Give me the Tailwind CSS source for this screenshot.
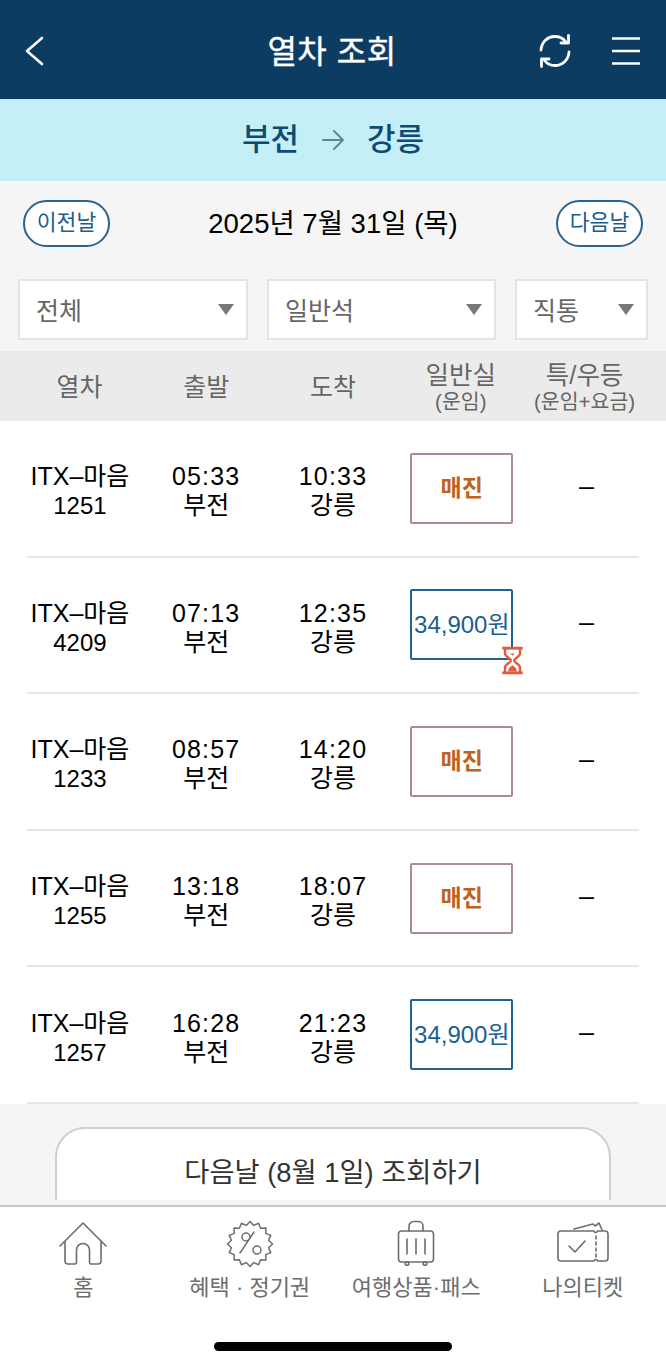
<!DOCTYPE html>
<html lang="ko">
<head>
<meta charset="utf-8">
<script src="https://cdn.jsdelivr.net/npm/@tailwindcss/browser@4"></script>
</head>
<body class="bg-white font-['Liberation_Sans','Noto_Sans_CJK_KR',sans-serif]">
<div class="w-[666px] h-[1365px] overflow-hidden flex flex-col bg-[#f5f5f5]">
  <!-- header -->
  <header class="h-[99px] shrink-0 bg-[#0c3c62] flex items-center text-white pl-[23px] pr-[25px] pt-[3px]">
    <div class="flex-1"><svg class="w-[22px] h-[30px]" viewBox="0 0 22 30" fill="none" stroke="#fff" stroke-width="2.6" stroke-linecap="round" stroke-linejoin="round"><path d="M19 2 4 15l15 13"/></svg></div>
    <h1 class="text-[32px] font-normal leading-none tracking-[0.5px] mt-[2px] [-webkit-text-stroke:0.4px_white]">열차 조회</h1>
    <div class="flex-1 flex items-center justify-end gap-[39px]">
      <svg class="w-[34px] h-[34px]" viewBox="0 0 34 34" fill="none" stroke="#fff" stroke-width="2.8" stroke-linecap="round" stroke-linejoin="round"><path d="M3 16C3.5 8 9.5 2.5 17 2.5c4.500 0 8 1.800 10.500 5"/><path d="M31 18c-.5 8-6.500 13.500-14 13.500-4.500 0-8-1.800-10.500-5"/><path d="M30.500 1.500v7.500h-7.500"/><path d="M3.500 32.500V25h7.500"/></svg>
      <svg class="w-[30px] h-[30px]" viewBox="0 0 30 30" fill="none" stroke="#fff" stroke-width="2.500"><path d="M1 2.500h28M1 15h28M1 27.500h28"/></svg>
    </div>
  </header>
  <!-- route -->
  <div class="h-[82px] shrink-0 bg-[#c5eff6] flex items-center justify-center gap-[22px] pt-[1px] text-[31px] font-medium text-[#0e4a72]">
    <span>부전</span>
    <svg class="w-[24px] h-[22px] -mt-[2px]" viewBox="0 0 24 22" fill="none" stroke="#5f8197" stroke-width="1.800" stroke-linecap="round" stroke-linejoin="round"><path d="M2 11h20M13 2l9 9-9 9"/></svg>
    <span>강릉</span>
  </div>
  <!-- date -->
  <div class="h-[98px] shrink-0 flex items-start justify-between pl-[23px] pr-[23px] pt-[19px]">
    <button class="w-[87px] h-[47px] rounded-[24px] border-2 border-[#2a6390] bg-white text-[21.5px] text-[#1c5d8b]">이전날</button>
    <div class="text-[27.5px] leading-[47px] text-black">2025년 7월 31일 (목)</div>
    <button class="w-[87px] h-[47px] rounded-[24px] border-2 border-[#2a6390] bg-white text-[21.5px] text-[#1c5d8b]">다음날</button>
  </div>
  <!-- filters -->
  <div class="h-[72px] shrink-0 flex items-start pl-[18px] gap-[19px] text-[25px] text-[#666]">
    <div class="w-[230px] h-[61px] bg-white border-2 border-[#e4e4e4] flex items-center justify-between pl-[16px] pr-[12px]"><span class="mt-[5px]">전체</span><span class="w-0 h-0 border-x-[8px] border-x-transparent border-t-[11px] border-t-[#777]"></span></div>
    <div class="w-[229px] h-[61px] bg-white border-2 border-[#e4e4e4] flex items-center justify-between pl-[16px] pr-[12px]"><span class="mt-[5px]">일반석</span><span class="w-0 h-0 border-x-[8px] border-x-transparent border-t-[11px] border-t-[#777]"></span></div>
    <div class="w-[133px] h-[61px] bg-white border-2 border-[#e4e4e4] flex items-center justify-between pl-[16px] pr-[12px]"><span class="mt-[5px]">직통</span><span class="w-0 h-0 border-x-[8px] border-x-transparent border-t-[11px] border-t-[#777]"></span></div>
  </div>
  <!-- table head -->
  <div class="h-[70px] shrink-0 bg-[#ebebeb] grid grid-cols-5 px-[16px] pt-[3px] items-center text-center text-[25px] text-[#666]">
    <div>열차</div>
    <div>출발</div>
    <div>도착</div>
    <div class="text-[25.5px] leading-[29px] pl-[2px]">일반실<div class="text-[20.5px] leading-[24px]">(운임)</div></div>
    <div class="text-[25.5px] leading-[29px] pr-[4px] whitespace-nowrap">특/우등<div class="text-[20.5px] leading-[24px]">(운임+요금)</div></div>
  </div>
  <!-- rows -->
  <div class="h-[683px] shrink-0 bg-white px-[16px] flex flex-col text-[25px] leading-[29px] text-black text-center">
    <div class="h-[136.600px] flex flex-col">
      <div class="flex-1 grid grid-cols-5 items-center">
        <div class="mt-[6px] pl-[1px]">ITX–마음<br><span class="text-[24px]">1251</span></div><div class="mt-[6px]"><span class="tracking-[1.2px]">05:33</span><br>부전</div><div class="mt-[6px]"><span class="tracking-[1.2px]">10:33</span><br>강릉</div>
        <div class="flex justify-center pl-[4px]"><div class="w-[103px] h-[71px] border-2 border-[#a98b92] rounded-[2px] flex items-center justify-center text-[23px] font-bold text-[#c0611c]">매진</div></div>
        <div class="pb-[4px] text-[27px]">–</div>
      </div>
      <div class="h-[2px] mx-[11px] bg-[#e6e6e6]"></div>
    </div>
    <div class="h-[136.600px] flex flex-col">
      <div class="flex-1 grid grid-cols-5 items-center">
        <div class="mt-[6px] pl-[1px]">ITX–마음<br><span class="text-[24px]">4209</span></div><div class="mt-[6px]"><span class="tracking-[1.2px]">07:13</span><br>부전</div><div class="mt-[6px]"><span class="tracking-[1.2px]">12:35</span><br>강릉</div>
        <div class="flex justify-center pl-[4px]"><div class="relative w-[103px] h-[71px] border-2 border-[#1f6396] rounded-[2px] flex items-center justify-center text-[24px] text-[#1c5f90] whitespace-nowrap">34,900원
          <svg class="absolute left-[89px] top-[55px] w-[23px] h-[29px]" viewBox="0 0 21 27"><path d="M3.500 2v5c0 3 5.500 4.500 5.500 6.500S3.500 17 3.500 20v5h14v-5c0-3-5.500-4.500-5.500-6.500S17.500 10 17.500 7V2z" fill="#fff" stroke="#e2593b" stroke-width="2.200"/><path d="M1 2h19M1 25h19" stroke="#e2593b" stroke-width="2.600" fill="none"/><path d="M6.500 23.500c0-3 2.500-4.500 4-5.500 1.500 1 4 2.500 4 5.500z" fill="#e2593b"/><path d="M8.500 7h4l-2 2z" fill="#e2593b"/></svg>
        </div></div>
        <div class="pb-[4px] text-[27px]">–</div>
      </div>
      <div class="h-[2px] mx-[11px] bg-[#e6e6e6]"></div>
    </div>
    <div class="h-[136.600px] flex flex-col">
      <div class="flex-1 grid grid-cols-5 items-center">
        <div class="mt-[6px] pl-[1px]">ITX–마음<br><span class="text-[24px]">1233</span></div><div class="mt-[6px]"><span class="tracking-[1.2px]">08:57</span><br>부전</div><div class="mt-[6px]"><span class="tracking-[1.2px]">14:20</span><br>강릉</div>
        <div class="flex justify-center pl-[4px]"><div class="w-[103px] h-[71px] border-2 border-[#a98b92] rounded-[2px] flex items-center justify-center text-[23px] font-bold text-[#c0611c]">매진</div></div>
        <div class="pb-[4px] text-[27px]">–</div>
      </div>
      <div class="h-[2px] mx-[11px] bg-[#e6e6e6]"></div>
    </div>
    <div class="h-[136.600px] flex flex-col">
      <div class="flex-1 grid grid-cols-5 items-center">
        <div class="mt-[6px] pl-[1px]">ITX–마음<br><span class="text-[24px]">1255</span></div><div class="mt-[6px]"><span class="tracking-[1.2px]">13:18</span><br>부전</div><div class="mt-[6px]"><span class="tracking-[1.2px]">18:07</span><br>강릉</div>
        <div class="flex justify-center pl-[4px]"><div class="w-[103px] h-[71px] border-2 border-[#a98b92] rounded-[2px] flex items-center justify-center text-[23px] font-bold text-[#c0611c]">매진</div></div>
        <div class="pb-[4px] text-[27px]">–</div>
      </div>
      <div class="h-[2px] mx-[11px] bg-[#e6e6e6]"></div>
    </div>
    <div class="h-[136.600px] flex flex-col">
      <div class="flex-1 grid grid-cols-5 items-center">
        <div class="mt-[6px] pl-[1px]">ITX–마음<br><span class="text-[24px]">1257</span></div><div class="mt-[6px]"><span class="tracking-[1.2px]">16:28</span><br>부전</div><div class="mt-[6px]"><span class="tracking-[1.2px]">21:23</span><br>강릉</div>
        <div class="flex justify-center pl-[4px]"><div class="w-[103px] h-[71px] border-2 border-[#1f6396] rounded-[2px] flex items-center justify-center text-[24px] text-[#1c5f90] whitespace-nowrap">34,900원</div></div>
        <div class="pb-[4px] text-[27px]">–</div>
      </div>
      <div class="h-[2px] mx-[11px] bg-[#e6e6e6]"></div>
    </div>
  </div>
  <!-- next day -->
  <div class="h-[101px] shrink-0 pt-[23px] px-[55px]">
    <div class="h-[73px] overflow-hidden">
      <div class="h-[100px] rounded-[30px] border-2 border-[#cfcfcf] bg-white text-center text-[27.3px] leading-[88px] text-[#333]">다음날 (8월 1일) 조회하기</div>
    </div>
  </div>
  <!-- bottom nav -->
  <nav class="flex-1 bg-white border-t-2 border-[#c6c6c6] relative">
    <div class="grid grid-cols-4 text-center text-[22px] text-[#6d6d6d] pt-[13px]">
      <div class="flex flex-col items-center">
        <svg class="w-[50px] h-[48px]" viewBox="0 0 50 48" fill="none" stroke="#6d6d6d" stroke-width="1.600" stroke-linecap="round" stroke-linejoin="round"><path d="M2 26 25 3l23 23"/><path d="M7 22v19a3 3 0 0 0 3 3h7a1.500 1.500 0 0 0 1.500-1.500V30a6.500 6.500 0 0 1 13 0v12.500A1.500 1.500 0 0 0 33 44h7a3 3 0 0 0 3-3V22"/></svg>
        <span class="mt-[3px]">홈</span>
      </div>
      <div class="flex flex-col items-center">
        <svg class="w-[48px] h-[48px]" viewBox="0 0 48 48" fill="none" stroke="#6d6d6d" stroke-width="1.500" stroke-linecap="round" stroke-linejoin="round"><polygon points="46.5,24 42.6,27.7 44.8,32.6 39.8,34.6 39.9,39.9 34.6,39.8 32.6,44.8 27.7,42.6 24,46.5 20.3,42.6 15.4,44.8 13.4,39.8 8.1,39.9 8.2,34.6 3.2,32.6 5.4,27.7 1.5,24 5.4,20.3 3.2,15.4 8.2,13.4 8.1,8.1 13.4,8.2 15.4,3.2 20.3,5.4 24,1.5 27.7,5.4 32.6,3.2 34.6,8.2 39.9,8.1 39.8,13.4 44.8,15.4 42.6,20.3"/><circle cx="20" cy="17" r="4"/><circle cx="31" cy="30" r="4"/><path d="M28 12 14 33"/></svg>
        <span class="mt-[3px]">혜택 · 정기권</span>
      </div>
      <div class="flex flex-col items-center">
        <svg class="w-[38px] h-[48px]" viewBox="0 0 38 48" fill="none" stroke="#6d6d6d" stroke-width="1.600" stroke-linecap="round" stroke-linejoin="round"><path d="M12 11V6a4.500 4.500 0 0 1 4.500-4.500h5A4.500 4.500 0 0 1 26 6v5"/><rect x="1.500" y="11" width="35" height="31" rx="3"/><path d="M10 19v15M19 19v15M28 19v15"/><circle cx="10" cy="43.500" r="1.800"/><circle cx="28" cy="43.500" r="1.800"/></svg>
        <span class="mt-[3px]">여행상품·패스</span>
      </div>
      <div class="flex flex-col items-center">
        <svg class="w-[52px] h-[48px]" viewBox="0 0 52 48" fill="none" stroke="#6d6d6d" stroke-width="1.600" stroke-linecap="round" stroke-linejoin="round"><path d="M4 11h33c.5 2 3 2 3.500 0H48a3 3 0 0 1 3 3v24a3 3 0 0 1-3 3h-7.500c-.5-2-3-2-3.500 0H4a3 3 0 0 1-3-3V14a3 3 0 0 1 3-3z"/><path d="M17 9l19-5 2 2 4-3 3 7"/><path d="M39 16v3M39 22v3M39 28v3M39 34v3"/><path d="M12 26l6 6 10-11"/></svg>
        <span class="mt-[3px]">나의티켓</span>
      </div>
    </div>
    <div class="absolute left-[214px] top-[135px] w-[238px] h-[9px] rounded-full bg-black"></div>
  </nav>
</div>
</body>
</html>
